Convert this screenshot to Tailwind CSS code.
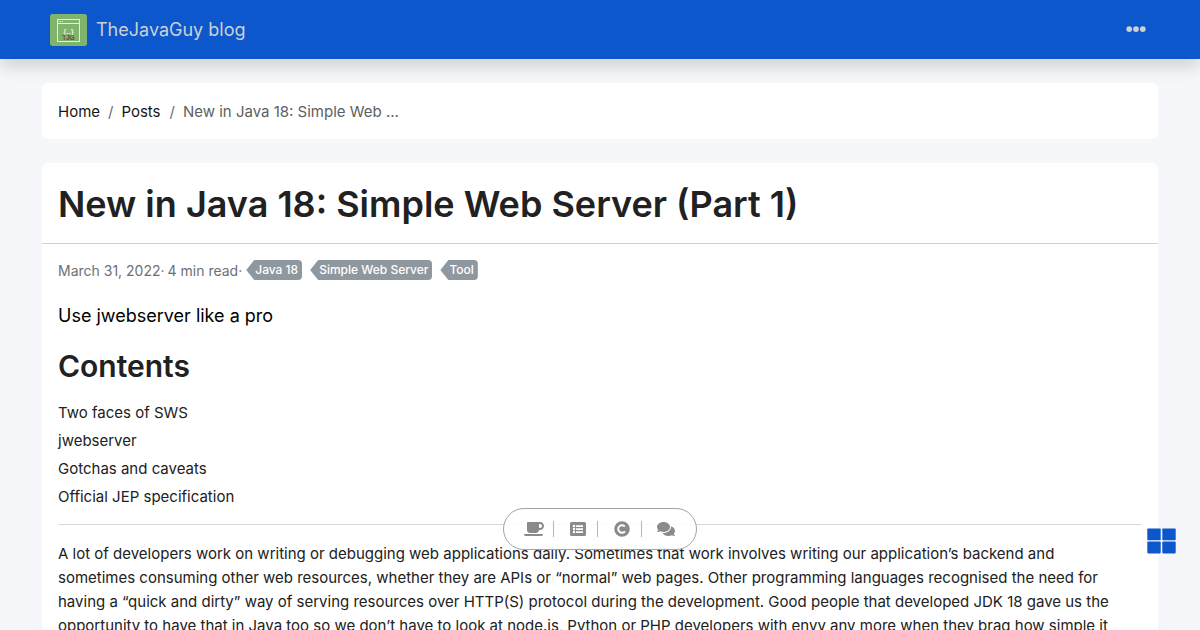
<!DOCTYPE html>
<html lang="en">
<head>
<meta charset="utf-8">
<meta name="viewport" content="width=device-width, initial-scale=1">
<title>New in Java 18: Simple Web Server (Part 1)</title>
<script src="https://cdn.jsdelivr.net/npm/@tailwindcss/browser@4"></script>
</head>
<body class="h-screen overflow-hidden bg-[#f6f7fa] font-['Inter','Liberation_Sans',sans-serif] text-[15px] leading-6 text-[#212121]">
<header class="relative bg-[#0b57cb] shadow-[0_8px_16px_rgba(0,0,0,0.15)]">
  <nav class="mx-auto flex h-[59px] max-w-[1116px] items-center justify-between pr-3 pl-2" aria-label="Main">
    <a href="#" class="flex items-center gap-[9px] text-[18px] text-[#cdd0d4]">
      <svg class="h-8 w-[37px]" viewBox="0 0 37 32" aria-hidden="true">
        <rect width="37" height="32" rx="2.5" fill="#80b36c"/>
        <rect x="7.5" y="5.5" width="22" height="22" fill="none" stroke="#e3f0da" stroke-width="1"/>
        <path d="M7 9.5h23" stroke="#e3f0da" stroke-width="1"/>
        <path d="M8.5 7.5h5" stroke="#e3f0da" stroke-width="1" stroke-dasharray="1 .7"/>
        <text x="18.5" y="19.5" text-anchor="middle" font-family="Liberation Sans" font-weight="700" font-size="8" fill="#e3f0da">{..}</text>
        <text x="18.5" y="26" text-anchor="middle" font-family="Liberation Sans" font-size="6.5" fill="#653a28" stroke="#653a28" stroke-width=".2">TJG</text>
      </svg>
      <span>TheJavaGuy blog</span>
    </a>
    <button type="button" aria-label="Menu">
      <svg class="h-5 w-5" viewBox="0 0 20 20" fill="#cdd0d4"><circle cx="3.2" cy="9.1" r="2.9"/><circle cx="10" cy="9.1" r="2.9"/><circle cx="16.8" cy="9.1" r="2.9"/></svg>
    </button>
  </nav>
</header>
<main class="mx-auto mt-6 flex max-w-[1140px] flex-col gap-6 px-3">
  <nav aria-label="Breadcrumb" class="rounded-md bg-white px-4 pt-[17px] pb-[15px]">
    <ol class="flex gap-2 text-[#6b6e71]">
      <li><a href="#" class="text-[#161616]">Home</a></li>
      <li aria-hidden="true">/</li>
      <li><a href="#" class="text-[#161616]">Posts</a></li>
      <li aria-hidden="true" class="pl-px">/</li>
      <li aria-current="page" class="text-[#5c5f62]">New in Java 18: Simple Web ...</li>
    </ol>
  </nav>
  <article class="rounded-md bg-white">
    <header class="border-b border-[#cfcfcf] px-4 pt-[17px] pb-[15px]"><h1 class="text-4xl leading-12 font-semibold">New in Java 18: Simple Web Server (Part 1)</h1></header>
    <div class="px-4 pt-4">
      <div class="flex items-start text-sm leading-[22px] text-[#6d7073]">
        <p class="flex pr-1"><time datetime="2022-03-31">March 31, 2022</time><span class="pr-[3px]">·</span><span>4 min read</span><span>·</span></p>
        <ul class="flex gap-2 text-xs leading-5 font-medium text-white">
          <li><a href="#" class="block rounded-r bg-[#8f989f] pr-1 pl-[9px] [clip-path:polygon(8px_0,100%_0,100%_100%,8px_100%,0_50%)]">Java 18</a></li>
          <li><a href="#" class="block rounded-r bg-[#8f989f] pr-1 pl-[9px] [clip-path:polygon(8px_0,100%_0,100%_100%,8px_100%,0_50%)]">Simple Web Server</a></li>
          <li><a href="#" class="block rounded-r bg-[#8f989f] pr-1 pl-[9px] [clip-path:polygon(8px_0,100%_0,100%_100%,8px_100%,0_50%)]">Tool</a></li>
        </ul>
      </div>
      <p class="mt-4 text-[18px] leading-9 text-black">Use jwebserver like a pro</p>
      <h2 class="mt-3 text-[30px] leading-10 font-semibold">Contents</h2>
      <ul class="mt-[13px] leading-7">
        <li><a href="#">Two faces of SWS</a></li>
        <li><a href="#">jwebserver</a></li>
        <li><a href="#">Gotchas and caveats</a></li>
        <li><a href="#">Official JEP specification</a></li>
      </ul>
      <hr class="mt-[13px] mb-[17px] border-[#d8d8d8]">
      <p>A lot of developers work on writing or debugging web applications daily. Sometimes that work involves writing our application’s backend and<br> sometimes consuming other web resources, whether they are APIs or “normal” web pages. Other programming languages recognised the need for<br> having a “quick and dirty” way of serving resources over HTTP(S) protocol during the development. Good people that developed JDK 18 gave us the<br> opportunity to have that in Java too so we don’t have to look at node.js, Python or PHP developers with envy any more when they brag how simple it</p>
    </div>
  </article>
</main>
<div class="fixed bottom-20 left-1/2 flex h-[42px] w-[194px] -translate-x-1/2 items-center rounded-full border border-[#a3a3a3] bg-white/90 pl-1.5 text-[#8a8a8a]">
  <a href="#" aria-label="Buy me a coffee" class="flex w-11 justify-center border-r border-[#b5b5b5] pl-1"><svg class="h-4 w-5" viewBox="0 0 640 512" fill="currentColor"><path d="M192 384h192c53 0 96-43 96-96h32c70.6 0 128-57.4 128-128S582.6 32 512 32H120c-13.3 0-24 10.7-24 24v232c0 53 43 96 96 96zM512 96c35.3 0 64 28.7 64 64s-28.7 64-64 64h-32V96h32zm47.7 384H48.3c-47.6 0-61-64-36-64h583.3c25 0 11.8 64-35.9 64z"/></svg></a>
  <a href="#" aria-label="Contents" class="flex w-11 justify-center border-r border-[#b5b5b5] pl-1"><svg class="h-4 w-4" viewBox="0 0 512 512" fill="currentColor" fill-rule="evenodd"><path d="M48 32h416a48 48 0 0 1 48 48v352a48 48 0 0 1-48 48H48a48 48 0 0 1-48-48V80a48 48 0 0 1 48-48zM128 120a40 40 0 1 0 0 80 40 40 0 1 0 0-80zm0 97a40 40 0 1 0 0 80 40 40 0 1 0 0-80zm0 97a40 40 0 1 0 0 80 40 40 0 1 0 0-80zM192 132v56h224v-56zm0 96v56h224v-56zm0 96v56h224v-56z"/></svg></a>
  <a href="#" aria-label="Copyright" class="flex w-11 justify-center border-r border-[#b5b5b5] pl-1"><svg class="h-4 w-4" viewBox="0 0 512 512"><circle cx="256" cy="256" r="248" fill="currentColor"/><path d="M346 178a120 120 0 1 0 4 152" fill="none" stroke="#fff" stroke-width="62"/></svg></a>
  <a href="#" aria-label="Comments" class="flex w-11 justify-center pl-1"><svg class="h-4 w-[18px]" viewBox="0 0 576 512" fill="currentColor"><path d="M416 192c0-88.4-93.1-160-208-160S0 103.6 0 192c0 34.3 14.1 65.9 38 92-13.4 30.2-35.5 54.2-35.8 54.5-2.2 2.3-2.8 5.7-1.5 8.7S4.8 352 8 352c36.6 0 66.9-12.3 88.7-25 32.2 15.7 70.3 25 111.3 25 114.9 0 208-71.6 208-160zm122 220c23.9-26 38-57.7 38-92 0-66.9-53.5-124.2-129.3-148.1.9 6.6 1.3 13.3 1.3 20.1 0 105.9-107.7 192-240 192-10.8 0-21.3-.8-31.7-1.9C207.8 439.6 281.8 480 368 480c41 0 79.1-9.2 111.3-25 21.8 12.7 52.1 25 88.7 25 3.2 0 6.1-1.9 7.3-4.8 1.3-2.9.7-6.3-1.5-8.7-.3-.3-22.4-24.2-35.8-54.5z"/></svg></a>
</div>
<button type="button" aria-label="Quick actions" class="fixed right-6 bottom-[76px]">
  <svg class="h-[26px] w-[29px]" viewBox="0 0 29 26" fill="#0b57cb"><rect x=".3" y=".4" width="13.4" height="11.8" rx=".8"/><rect x="15.3" y=".4" width="13.4" height="11.8" rx=".8"/><rect x=".3" y="13.6" width="13.4" height="11.8" rx=".8"/><rect x="15.3" y="13.6" width="13.4" height="11.8" rx=".8"/></svg>
</button>
</body>
</html>
